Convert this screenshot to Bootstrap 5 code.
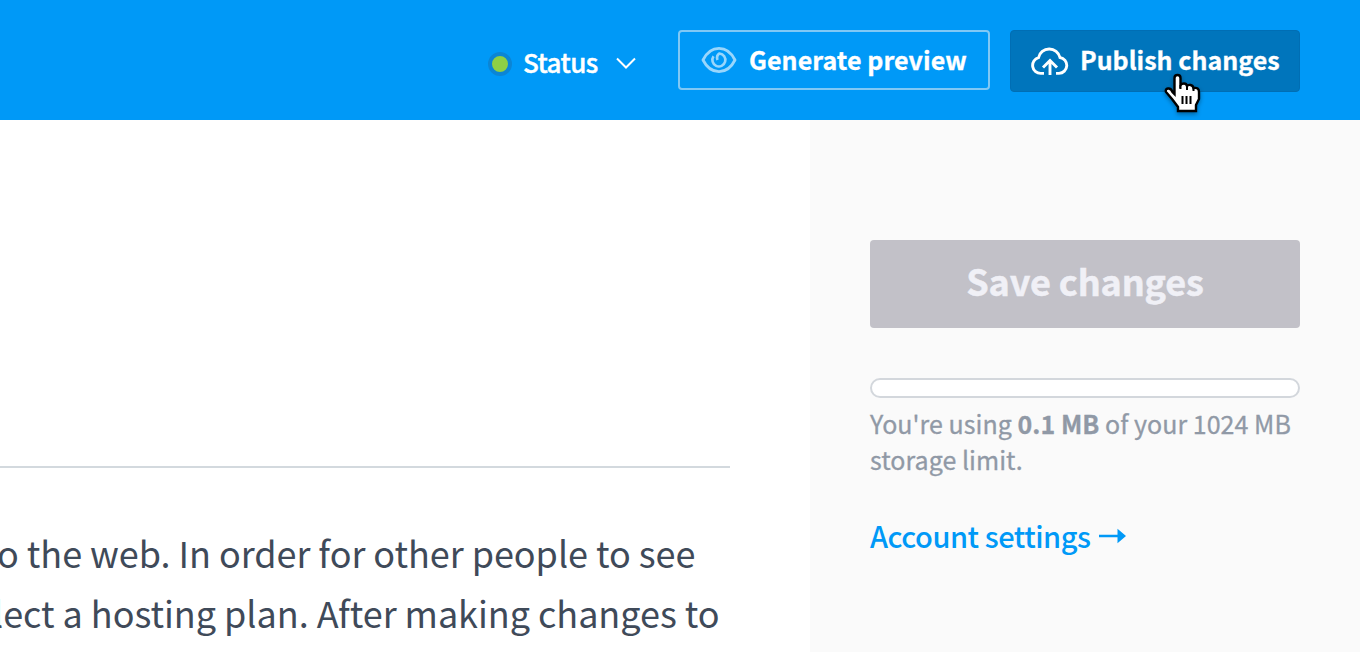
<!DOCTYPE html>
<html lang="en"><head><meta charset="utf-8"><title>Publish</title>
<meta name="viewport" content="width=device-width, initial-scale=1">
<link rel="stylesheet" href="https://cdn.jsdelivr.net/npm/bootstrap@5.3.0/dist/css/bootstrap.min.css">
<style>
body{font-family:"Noto Sans CJK SC",sans-serif;color:#3f4a59;height:652px;background:#fff}
.topbar{height:120px;background:#0099f7;padding:30px 60px 0 488px;color:#fff}
.topbar .btn{font-size:25px;font-weight:700;color:#fff;border-radius:4px;line-height:1;white-space:nowrap;padding:0;-webkit-text-stroke:.3px currentColor}
.dot{width:24px;height:24px;border-radius:50%;background:#8fd044;border:4px solid #0b85d4;flex:none}
.status{height:68px;width:190px;font-size:26px;font-weight:500;letter-spacing:-.6px;-webkit-text-stroke:.4px currentColor}
.status-label{margin-left:11px;margin-right:18px;margin-top:-6px}
.status svg{margin-top:-2px}
.btn.preview{width:312px;height:60px;border:2px solid #80c8f5}
.btn.publish{width:290px;height:62px;background:#0075bc;border:1px solid #006eb4;margin-left:20px}
.btn.preview span{margin-top:-2px;letter-spacing:.06px}
.btn.publish span{margin-top:-4px}
.main-pane{width:810px;height:532px}
.rule{width:730px;height:2px;background:#d3d9de;margin-top:346px}
.copy{font-size:36px;line-height:60px;margin-top:54px;white-space:nowrap;letter-spacing:-.04px}
.copy-line{margin-left:-3px}
.copy-line + .copy-line{margin-left:-7px}
.side{width:550px;background:#fafafa;padding:120px 60px 0}
.btn.save,.btn.save:disabled{width:430px;height:88px;background:#c2c1c8;color:#f0f0f6;font-size:36px;letter-spacing:-.15px;line-height:1;font-weight:700;border:0;border-radius:4px;opacity:1;padding:0 0 8px;-webkit-text-stroke:.5px currentColor}
.meter{height:20px;border:2px solid #d3d7dc;border-radius:10px;background:#fff;margin-top:50px}
.usage{font-size:25px;line-height:36px;color:#9099a6;margin-top:7px;white-space:nowrap;letter-spacing:.04px;-webkit-text-stroke:.3px currentColor}
.acct{font-size:29px;letter-spacing:-.47px;color:#0099f7;font-weight:500;text-decoration:none;line-height:40px;margin-top:38px}
.acct svg{margin-left:9px;margin-top:1px}
.pointer{position:absolute;left:1160px;top:70px;filter:drop-shadow(0 2px 2px rgba(0,0,0,.35))}
</style>
<script src="https://cdn.jsdelivr.net/npm/bootstrap@5.3.0/dist/js/bootstrap.bundle.min.js"></script>
</head><body class="overflow-hidden position-relative">
<header class="topbar d-flex">
  <div class="status d-flex align-items-center"><span class="dot"></span><span class="status-label">Status</span>
    <svg width="20" height="12" viewBox="0 0 20 12" fill="none" stroke="#fff" stroke-width="2"><path d="M1 1.5 10 10.500 19 1.5"/></svg></div>
  <button class="btn preview d-flex align-items-center">
    <svg width="36" height="28" viewBox="0 0 36 28" style="margin-left:21px;margin-right:12px" fill="none" stroke="#99d6fc" stroke-width="2.800"><path d="M2 14C6 6 11.500 2.400 18 2.400S30 6 34 14C30 22 24.500 25.600 18 25.600S6 22 2 14Z" stroke-linejoin="round"/><path stroke-width="2.600" d="M12.500 10.300A6.500 6.500 0 1 0 18.500 7.500Q15 9.500 16.500 14"/></svg>
    <span>Generate preview</span></button>
  <button class="btn publish d-flex align-items-center">
    <svg width="38" height="30" viewBox="0 0 38 30" style="margin-left:20px;margin-right:11px" fill="none" stroke="#fff" stroke-width="2.900"><path d="M13 27.400H10A8 8 0 0 1 7.500 11.700A11 11 0 0 1 29 11.500A8 8 0 0 1 28 27.400H25M19 29V15M12 21.500 19 14.500 26 21.500"/></svg>
    <span>Publish changes</span></button>
</header>
<div class="d-flex">
  <main class="main-pane overflow-hidden"><div class="rule"></div><div class="copy"><div class="copy-line">o the web. In order for other people to see</div><div class="copy-line">lect a hosting plan. After making changes to</div></div></main>
  <aside class="side"><button class="btn save" disabled>Save changes</button><div class="meter"></div>
    <div class="usage">You're using <b>0.1 MB</b> of your 1024 MB<br>storage limit.</div>
    <a class="acct d-flex align-items-center" href="#">Account settings<svg width="28" height="16" viewBox="0 0 28 16" fill="#0099f7"><path d="M0 6.700H18.500V.8L27 8 18.500 15.200V9.300H0Z"/></svg></a></aside>
</div>
<svg class="pointer" width="44" height="46" viewBox="0 0 44 46"><path d="M14.500 8Q14.500 5 17.500 5T20.500 8V15Q21.500 13.500 24 13.500T27 16Q28 14.500 30.500 15T33.500 18Q39 17 39 22V29L36 35V41H18V37L12 29 6 22Q5 19 8 18.500T12.500 22L14.500 24Z" fill="#fff" stroke="#000" stroke-width="2.400"/><path d="M20.500 15V19M27 16V20M33.500 18V21M22.500 26V34M26.500 26V34M30.500 26V34" stroke="#000" stroke-width="2"/></svg>
</body></html>
